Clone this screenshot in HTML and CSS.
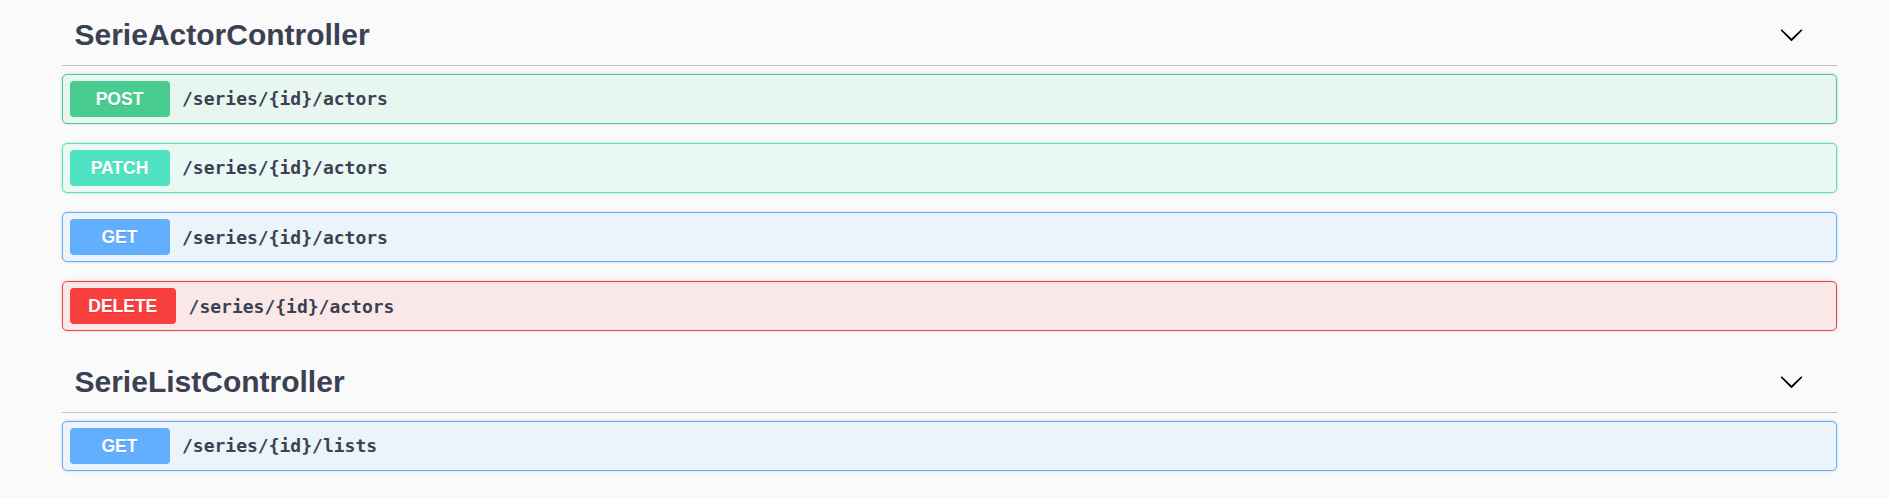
FILE: index.html
```html
<!DOCTYPE html>
<html lang="en">
<head>
<meta charset="utf-8">
<title>Swagger</title>
<link rel="stylesheet" href="styles.css">
</head>
<body>
<div class="page">
  <section class="tag">
    <h3 class="tag-head">
      <span class="tag-name">SerieActorController</span>
      <svg class="arrow" viewBox="0 0 20 20" width="25" height="25"><path d="M17.418 6.109c.272-.268.709-.268.979 0s.271.701 0 .969l-7.908 7.830c-.27.268-.707.268-.979 0l-7.908-7.830c-.27-.268-.27-.701 0-.969.271-.268.709-.268.979 0L10 13.250l7.418-7.141z"/></svg>
    </h3>
    <div class="ops">
      <div class="op post"><span class="method">POST</span><span class="path">/series/{id}/actors</span></div>
      <div class="op patch"><span class="method">PATCH</span><span class="path">/series/{id}/actors</span></div>
      <div class="op get"><span class="method">GET</span><span class="path">/series/{id}/actors</span></div>
      <div class="op delete"><span class="method">DELETE</span><span class="path">/series/{id}/actors</span></div>
    </div>
  </section>
  <section class="tag">
    <h3 class="tag-head">
      <span class="tag-name">SerieListController</span>
      <svg class="arrow" viewBox="0 0 20 20" width="25" height="25"><path d="M17.418 6.109c.272-.268.709-.268.979 0s.271.701 0 .969l-7.908 7.830c-.27.268-.707.268-.979 0l-7.908-7.830c-.27-.268-.27-.701 0-.969.271-.268.709-.268.979 0L10 13.250l7.418-7.141z"/></svg>
    </h3>
    <div class="ops">
      <div class="op get"><span class="method">GET</span><span class="path">/series/{id}/lists</span></div>
    </div>
  </section>
</div>
</body>
</html>
```
FILE: styles.css
```css
html, body {
  margin: 0;
  padding: 0;
  background: #fafafa;
}
body {
  font-family: "Liberation Sans", Arial, sans-serif;
  color: #3b4151;
}
.page {
  margin-left: 62px;
  width: 1775px;
  padding-top: 3.5px;
}
.tag-head {
  display: flex;
  align-items: center;
  justify-content: space-between;
  margin: 0 0 7.5px;
  padding: 12.5px 33px 12px 12.5px;
  border-bottom: 1px solid rgba(59, 65, 81, 0.3);
  font-size: 30px;
  line-height: 37px;
  font-weight: bold;
  color: #3b4151;
}
.arrow {
  display: block;
  fill: #000;
}
.ops {
  display: flex;
  flex-direction: column;
}
.op {
  display: flex;
  align-items: center;
  box-sizing: border-box;
  height: 50px;
  padding: 0 6.5px;
  margin-bottom: 19.3px;
  border: 1px solid;
  border-radius: 5px;
  box-shadow: 0 0 3px rgba(0, 0, 0, 0.19);
}
.method {
  box-sizing: border-box;
  min-width: 100px;
  height: 36px;
  line-height: 36px;
  padding: 0 18.75px;
  border-radius: 4px;
  text-align: center;
  color: #fff;
  font-size: 17.5px;
  font-weight: bold;
  text-shadow: 0 1px 0 rgba(0, 0, 0, 0.1);
}
.path {
  padding: 0 12.5px;
  font-family: "DejaVu Sans Mono", "Liberation Mono", monospace;
  font-size: 18px;
  font-weight: bold;
  color: #3b4151;
}
.post { background: #e8f6f0; border-color: #49cc90; }
.post .method { background: #49cc90; }
.patch { background: #e9f8f5; border-color: #50e3c2; }
.patch .method { background: #50e3c2; }
.get { background: #ebf3fb; border-color: #61affe; }
.get .method { background: #61affe; }
.delete { background: #fae7e7; border-color: #f93e3e; }
.delete .method { background: #f93e3e; }
```
